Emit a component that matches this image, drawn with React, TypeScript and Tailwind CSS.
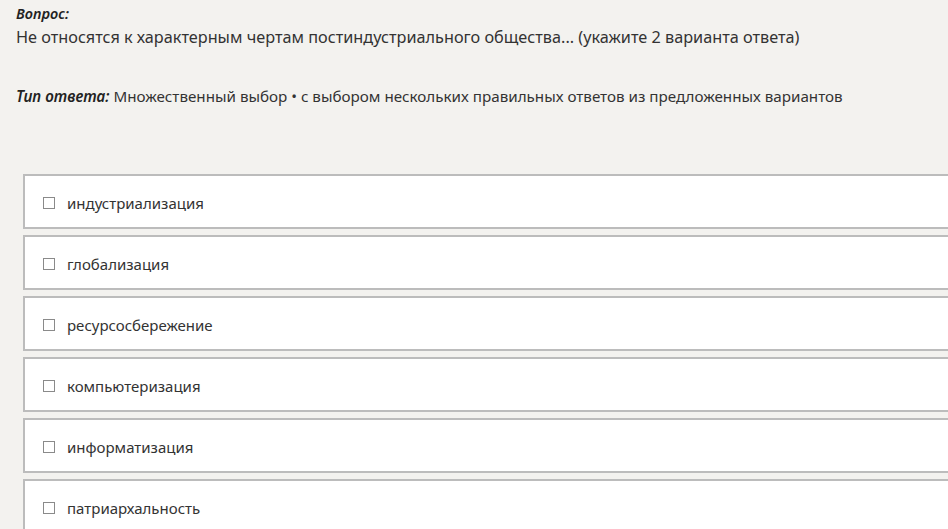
const options = [
  "индустриализация",
  "глобализация",
  "ресурсосбережение",
  "компьютеризация",
  "информатизация",
  "патриархальность",
];

export default function App() {
  return (
    <div
      className="w-[948px] h-[529px] overflow-hidden bg-[#f3f2ef] text-[#333333]"
      style={{ fontFamily: '"Noto Sans", "Open Sans", sans-serif' }}
    >
      <div className="pl-4 pt-[3px]">
        <div className="text-[14.5px] leading-[20px] font-semibold italic text-[#222]">Вопрос:</div>
        <div className="text-[16.25px] leading-[26px] mt-[1px]">
          Не относятся к характерным чертам постиндустриального общества... (укажите 2 варианта ответа)
        </div>
        <div className="text-[15.2px] leading-[22px] mt-[35px]">
          <span className="font-semibold italic text-[#222]">Тип ответа:</span> Множественный выбор • с выбором нескольких правильных ответов из предложенных вариантов
        </div>
      </div>

      <div className="ml-[23px] mt-[67px] w-[940px] flex flex-col gap-[6px]">
        {options.map((o) => (
          <div
            key={o}
            className="h-[55px] bg-white border-2 border-[#bcbcbc] flex items-center pl-[18px] pt-[4px]"
          >
            <span className="w-[12px] h-[12px] border border-[#8a8a8a] bg-white mr-[12px] mb-[2px]" />
            <span className="text-[15px]">{o}</span>
          </div>
        ))}
      </div>
    </div>
  );
}
